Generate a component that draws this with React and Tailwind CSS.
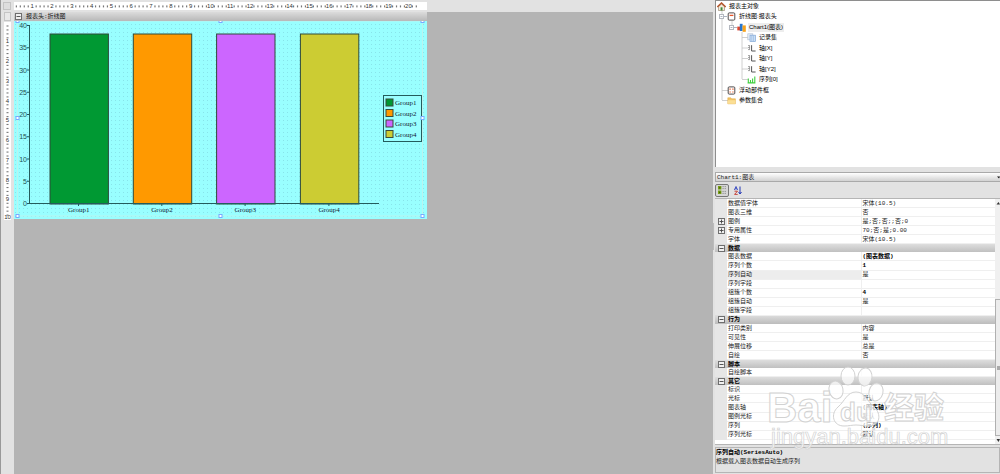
const groups = [
  { name: 'Group1', color: '#009933', x: 36 },
  { name: 'Group2', color: '#ff9900', x: 119.3 },
  { name: 'Group3', color: '#cc66ff', x: 202.6 },
  { name: 'Group4', color: '#cccc33', x: 286.4 },
]

const handles = [
  [3.5, 0], [206.5, 0], [408.5, 0],
  [3.5, 97], [408.5, 97],
  [3.5, 195], [206.5, 195], [408.5, 195],
]

const properties = [
  { name: '数据值字体', value: '宋体(10.5)' },
  { name: '图表三维', value: '否' },
  { name: '图例', value: '是;否;否;;否;0', expandable: true },
  { name: '专用属性', value: '70;否;是;0.00', expandable: true },
  { name: '字体', value: '宋体(10.5)' },
  { name: '数据', section: true },
  { name: '图表数据', value: '(图表数据)', bold: true },
  { name: '序列个数', value: '1', bold: true },
  { name: '序列自动', value: '是', selected: true },
  { name: '序列字段', value: '' },
  { name: '组簇个数', value: '4', bold: true },
  { name: '组簇自动', value: '是' },
  { name: '组簇字段', value: '' },
  { name: '行为', section: true },
  { name: '打印类别', value: '内容' },
  { name: '可见性', value: '是' },
  { name: '伸展位移', value: '总是' },
  { name: '自绘', value: '否' },
  { name: '脚本', section: true },
  { name: '自绘脚本', value: '' },
  { name: '其它', section: true },
  { name: '标识', value: '' },
  { name: '光标', value: '默认' },
  { name: '图表轴', value: '(图表轴)', bold: true },
  { name: '图例光标', value: '默认' },
  { name: '序列', value: '(序列)', bold: true },
  { name: '序列光标', value: '默认' },
]

function Toggle({ plus }) {
  return (
    <svg viewBox="0 0 7 7" className="block size-[7px] shrink-0" aria-hidden="true">
      <rect x="0.5" y="0.5" width="6" height="6" fill="#f0f0f0" stroke="#6e6e6e" />
      <path d={plus ? 'M1.5 3.5h4M3.5 1.5v4' : 'M1.5 3.5h4'} stroke="#444" strokeWidth="0.9" />
    </svg>
  )
}

function HorizontalRuler() {
  const dots = []
  for (let i = 1; i < 103; i++) if (i % 5) dots.push(18.2 + (i - 5) * 3.96)
  return (
    <svg viewBox="0 0 413 8" className="block h-2 w-[413px] bg-white" aria-label="水平标尺">
      {dots.map((x) => <rect key={x} x={x - 0.6} y="3.4" width="1.2" height="2" fill="#777" />)}
      {Array.from({ length: 20 }, (_, i) => (
        <text key={i} x={18.2 + i * 19.8} y="6.4" textAnchor="middle" fontSize="6" fill="#333">{i + 1}</text>
      ))}
    </svg>
  )
}

function VerticalRuler() {
  const dots = []
  for (let i = 1; i < 50; i++) if (i % 5) dots.push(i * 3.94)
  return (
    <svg viewBox="0 0 7 198" className="block h-[198px] w-[7px] bg-white" aria-label="垂直标尺">
      {dots.map((y) => <rect key={y} x="2.5" y={y - 0.5} width="2" height="1.1" fill="#777" />)}
      {Array.from({ length: 10 }, (_, i) => (
        <text key={i} x="3.5" y={Math.min(21.4 + i * 19.75, 197)} textAnchor="middle" fontSize="6" fill="#333">
          {i + 1}
        </text>
      ))}
    </svg>
  )
}

function Chart() {
  return (
    <svg
      viewBox="0 0 413 198"
      className="block h-[198px] w-[413px] font-['Liberation_Serif',serif]"
      role="img"
      aria-label="折线图"
    >
      <defs>
        <pattern id="dots" width="4" height="4" patternUnits="userSpaceOnUse">
          <rect width="4" height="4" fill="#99ffff" />
          <rect x="1" y="3" width="1" height="1" fill="#88e4ea" />
        </pattern>
      </defs>
      <rect width="413" height="198" fill="url(#dots)" />
      <rect x="3.5" y="0" width="405" height="195" fill="none" stroke="#b9f4ef" />
      {groups.map((g) => (
        <g key={g.name}>
          <rect x={g.x} y="13" width="58.4" height="170" fill={g.color} stroke="#2f4a3a" />
          <path d={`M${g.x + 28.5} 183v2`} stroke="#245c5c" />
          <text x={g.x + 28.7} y="191" textAnchor="middle" fontSize="7" fill="#123">{g.name}</text>
        </g>
      ))}
      <path d="M15.5 4v179" stroke="#245c5c" fill="none" />
      <path d="M15 182.5h350" stroke="#245c5c" fill="none" />
      {Array.from({ length: 9 }, (_, i) => (
        <g key={i}>
          <path d={`M13 ${182.5 - i * 22.25}h3`} stroke="#245c5c" />
          <text x="13" y={185 - i * 22.25} textAnchor="end" fontSize="7" fill="#245050" className="font-['Liberation_Sans',sans-serif]">
            {i * 5}
          </text>
        </g>
      ))}
      <rect x="369.5" y="74.5" width="38" height="46" fill="#99ffff" stroke="#245c5c" />
      {groups.map((g, i) => (
        <g key={g.name}>
          <rect x="372" y={78 + i * 10.5} width="7" height="7" fill={g.color} stroke="#3a4a3a" />
          <text x="381" y={84 + i * 10.5} fontSize="7" fill="#123">{g.name}</text>
        </g>
      ))}
      {handles.map(([x, y]) => (
        <rect key={`${x}-${y}`} x={x - 1.5} y={y - 1.5} width="3" height="3" fill="#fff" stroke="#77aaff" />
      ))}
    </svg>
  )
}

function TreeIcon({ kind }) {
  return (
    <svg viewBox="0 0 9 9" className="block size-[9px] shrink-0" aria-hidden="true">
      {kind === 'home' && (
        <>
          <path d="M1.5 4.5v4h6v-4L4.5 2z" fill="#f5ead8" stroke="#8c7a62" strokeWidth="0.6" />
          <path d="M0.3 5 4.5 1 8.7 5" fill="none" stroke="#b5552c" strokeWidth="1.5" />
          <rect x="3.6" y="5.3" width="1.9" height="3.2" fill="#3f8a3a" />
        </>
      )}
      {kind === 'report' && (
        <>
          <rect x="1.2" y="0.9" width="6.6" height="7.2" rx="1" fill="#fff" stroke="#4f4a4a" strokeWidth="1" />
          <path d="M2.6 3.4h3.8" stroke="#e8552a" strokeWidth="1.3" />
        </>
      )}
      {kind === 'chart' && (
        <>
          <rect x="0.3" y="3.6" width="2.7" height="3.8" fill="#e0452b" />
          <rect x="2.8" y="0.8" width="2.8" height="7.2" fill="#2676cf" />
          <rect x="5.6" y="2.4" width="3.2" height="6.4" fill="#f6a21b" />
        </>
      )}
      {kind === 'records' && (
        <>
          <rect x="0.8" y="0.8" width="5" height="6" fill="#e8eef6" stroke="#b4c2d4" strokeWidth="0.7" />
          <rect x="3" y="2.2" width="5.4" height="6.2" fill="#cfe2f7" stroke="#7fa6d6" strokeWidth="0.7" />
          <path d="M4.8 2.4v5.8M6.6 2.4v5.8" stroke="#8bb0dc" strokeWidth="0.6" />
        </>
      )}
      {kind === 'axis' && (
        <>
          <path d="M4.6 1.2v5.8h4" fill="none" stroke="#555" strokeWidth="1" />
          <path d="M1 1.6h1.6M1 3.6h1.6M1 5.6h1.6M2.6 1.4v4.4" fill="none" stroke="#777" strokeWidth="0.7" />
        </>
      )}
      {kind === 'series' && (
        <path d="M1.3 8V3.6M3.5 8V5M5.6 8V3.6M7.8 8V1.4M0.6 7.9h7.8" fill="none" stroke="#3fd03f" strokeWidth="1.1" />
      )}
      {kind === 'float' && (
        <>
          <rect x="1.2" y="0.9" width="6.6" height="7.2" rx="1" fill="#fff" stroke="#4f4a4a" strokeWidth="1" />
          <path d="M2.4 3.2h1.4M5.2 3.2h1.4M2.4 6h1.4M5.2 6h1.4" stroke="#ee6a3c" strokeWidth="1.2" />
        </>
      )}
      {kind === 'folder' && (
        <>
          <path d="M0.8 1.8h3l0.8 1h3.8v5H0.8z" fill="#f3c566" stroke="#e0a63e" strokeWidth="0.5" />
          <path d="M0.8 4.2h7.6v3.6H0.8z" fill="#fbdf95" />
        </>
      )}
    </svg>
  )
}

function TreeRow({ icon, label, indent, open, selected }) {
  return (
    <li className={`flex min-h-0 flex-1 items-center ${indent}`}>
      {open && (
        <svg viewBox="0 0 8 5" className="block h-[5px] w-2 shrink-0" aria-hidden="true">
          <rect x="0.5" y="0.5" width="4" height="4" fill="#fff" stroke="#b4b8c0" />
          <path d="M1.5 2.5h2M5 2.5h3" stroke="#8a94a6" strokeWidth="0.7" />
        </svg>
      )}
      <TreeIcon kind={icon} />
      <span className={`ml-[2px] whitespace-nowrap px-px leading-[9px] ${selected ? 'bg-[#ededed]' : ''}`}>{label}</span>
    </li>
  )
}

function ObjectTree() {
  return (
    <section className="relative h-[167px] border-t border-l border-[#8e8e8e] bg-white font-['Liberation_Sans','Noto_Sans_CJK_SC',sans-serif] text-[6px]">
      <svg viewBox="0 0 40 106" className="absolute top-0 left-0 h-[106px] w-10" aria-hidden="true">
        <path d="M6 10v89M6 89.5h7M6 99.5h7M16 20v6M26 31v47M26 36.5h6M26 47h6M26 57.5h6M26 68h6M26 78.5h6" fill="none" stroke="#c4c4c4" strokeWidth="0.8" />
      </svg>
      <ul className="relative flex h-[105px] flex-col">
        <TreeRow icon="home" label="报表主对象" indent="pl-[1px]" />
        <TreeRow icon="report" label="折线图:报表头" indent="pl-[3px]" open />
        <TreeRow icon="chart" label="Chart1(图表)" indent="pl-[13px]" open selected />
        <TreeRow icon="records" label="记录集" indent="pl-[31px]" />
        <TreeRow icon="axis" label="轴[X]" indent="pl-[31px]" />
        <TreeRow icon="axis" label="轴[Y]" indent="pl-[31px]" />
        <TreeRow icon="axis" label="轴[Y2]" indent="pl-[31px]" />
        <TreeRow icon="series" label="序列[0]" indent="pl-[31px]" />
        <TreeRow icon="float" label="浮动部件框" indent="pl-[11px]" />
        <TreeRow icon="folder" label="参数集合" indent="pl-[11px]" />
      </ul>
    </section>
  )
}

function PropertyTable() {
  return (
    <table className="h-[241px] w-full table-fixed border-collapse leading-[7px]" aria-label="属性">
      <colgroup>
        <col className="w-[12px]" />
        <col className="w-[134px]" />
        <col />
      </colgroup>
      <tbody>
        {properties.map((p) =>
          p.section ? (
            <tr key={p.name} className="bg-linear-to-b from-[#dedede] to-[#bcbcbc] font-bold text-black">
              <td className="p-0 pl-[3px]"><Toggle /></td>
              <th colSpan={2} className="p-0 pl-px text-left">{p.name}</th>
            </tr>
          ) : (
            <tr key={p.name}>
              <td className="bg-[#e6e6e6] p-0 pl-[3px]">{p.expandable && <Toggle plus />}</td>
              <th className={`border-r border-b border-[#efefef] p-0 pl-px text-left font-normal ${p.selected ? 'bg-[#ededed]' : ''}`}>{p.name}</th>
              <td className={`border-b border-[#efefef] p-0 pl-px ${p.bold ? 'font-bold text-black' : ''}`}>{p.value}</td>
            </tr>
          ),
        )}
      </tbody>
    </table>
  )
}

function Watermark() {
  return (
    <svg viewBox="-4 0 188 90" className="pointer-events-none absolute right-[46px] bottom-[20px] h-[90px] w-[188px]" aria-hidden="true">
      <g fill="#fff" fillOpacity="0.72" stroke="#d2d2d2" strokeWidth="1">
        <ellipse cx="66" cy="26" rx="7" ry="9" transform="rotate(-12 66 26)" />
        <ellipse cx="78" cy="12" rx="7" ry="9" />
        <ellipse cx="95" cy="13" rx="7" ry="9" transform="rotate(8 95 13)" />
        <ellipse cx="106" cy="28" rx="7" ry="9" transform="rotate(14 106 28)" />
        <path d="M86 28c-9 0-11 9-18 15-8 7-5 19 6 19 5 0 8-1 12-1s8 1 13 1c11 0 13-12 5-19-7-6-9-15-18-15z" />
        <text x="-3" y="58" fontSize="42" fontWeight="bold" className="font-['Liberation_Sans',sans-serif]">Bai</text>
        <text x="70" y="57" fontSize="26" fontWeight="bold" className="font-['Liberation_Sans',sans-serif]">du</text>
        <text x="114" y="54" fontSize="30" fontWeight="bold" className="font-['Noto_Sans_CJK_SC',sans-serif]">经验</text>
        <text x="1" y="80" fontSize="22" strokeWidth="0.7" className="font-['Liberation_Sans',sans-serif]">jingyan.baidu.com</text>
      </g>
    </svg>
  )
}

function PropertyPanel() {
  return (
    <section className="flex flex-1 flex-col font-['Liberation_Mono','Noto_Sans_CJK_SC',monospace] text-[6px] text-[#222]">
      <button type="button" className="mt-[5px] flex h-[10px] items-center justify-between border border-r-0 border-[#a9a9a9] bg-linear-to-b from-white to-[#d2d2d2] pl-px">
        <span>Chart1:图表</span>
        <svg viewBox="0 0 3 3" className="size-[3px]" aria-hidden="true"><path d="M0 0.5h3L2 2.5z" fill="#111" /></svg>
      </button>
      <div className="flex h-4 items-center gap-[5px]">
        <button type="button" aria-label="按分类排序" className="flex h-[13px] w-[14px] items-center justify-center rounded-[2px] border border-[#777] bg-[#d6d6d6]">
          <svg viewBox="0 0 8 8" className="size-2" aria-hidden="true">
            <path d="M0 0h3.4v3.4H0zM0 4.6h3.4V8H0z" fill="#789f14" />
            <path d="M1 1.2h1.4v1.2H1zM1 5.8h1.4V7H1z" fill="#3f5c08" />
            <path d="M4.4 0.6h1.4M6.6 0.6H8M4.4 2.6h1.4M6.6 2.6H8M4.4 5.4h1.4M6.6 5.4H8M4.4 7.4h1.4M6.6 7.4H8" stroke="#888" strokeWidth="0.8" />
          </svg>
        </button>
        <button type="button" aria-label="按字母排序">
          <svg viewBox="0 0 8 9" className="h-[9px] w-2" aria-hidden="true">
            <path d="M0.4 4 2 0.5 3.6 4M1 2.8h2" fill="none" stroke="#3346c0" strokeWidth="0.9" />
            <path d="M0.5 5.2h3L0.5 8.4h3.2" fill="none" stroke="#c2342b" strokeWidth="0.9" />
            <path d="M6 0.5v7M4.6 6 6 8l1.5-2" fill="none" stroke="#2336b4" strokeWidth="1" />
          </svg>
        </button>
      </div>
      <div className="flex h-[247px] border-y border-[#b5b5b5] bg-white">
        <div className="min-w-0 flex-1"><PropertyTable /></div>
        <div className="flex w-[5px] flex-col items-center bg-[#f0f0f0]">
          <svg viewBox="0 0 4 8" className="h-2 w-1" aria-hidden="true"><path d="M0.5 5.5 2.5 3 4 5.5z" fill="#333" /></svg>
          <div className="mt-[92px] flex h-[137px] w-full items-center border border-r-0 border-[#b0b0b0] bg-[#ececec]">
            <span className="ml-px h-1 w-full bg-[#aaa]" />
          </div>
          <svg viewBox="0 0 4 8" className="h-2 w-1" aria-hidden="true"><path d="M0.5 3 2.5 6 4 3z" fill="#333" /></svg>
        </div>
      </div>
      <div className="mt-[2px] mb-px flex-1 border border-[#b5b5b5] leading-[9px]">
        <h2 className="font-bold text-black">序列自动(SeriesAuto)</h2>
        <p>根据载入图表数据自动生成序列</p>
      </div>
    </section>
  )
}

export default function App() {
  return (
    <div className="relative flex min-h-screen w-full overflow-hidden bg-[#e2e2e2] font-['Liberation_Sans','Noto_Sans_CJK_SC',sans-serif] text-[6px]">
      <main className="flex min-w-0 flex-1 flex-col border-l border-[#999]">
        <div className="flex h-3 shrink-0 items-center">
          <div className="ml-[2px] mr-[3px] size-2 border border-[#c4c4c4] bg-[#dedede]" />
          <HorizontalRuler />
        </div>
        <div className="flex flex-1">
          <div className="flex w-[13px] shrink-0 flex-col items-center">
            <div className="mb-px h-[9px] w-[7px] border border-[#c4c4c4] bg-[#e8e8e8]" />
            <VerticalRuler />
          </div>
          <div className="flex-1 bg-[#b4b4b4]">
            <div className="flex h-[9px] w-[413px] items-center gap-1 bg-linear-to-b from-[#dcdcdc] to-[#b8b8b8] pl-px text-[#111]">
              <Toggle />
              <h1 className="font-['Liberation_Mono','Noto_Sans_CJK_SC',monospace] leading-[9px]">报表头:折线图</h1>
            </div>
            <Chart />
          </div>
        </div>
      </main>
      <div className="w-[2px] pt-[223px]"><div className="h-[27px] w-px bg-[#bbb]" /></div>
      <aside className="flex w-[285px] flex-col">
        <ObjectTree />
        <PropertyPanel />
      </aside>
      <Watermark />
    </div>
  )
}
